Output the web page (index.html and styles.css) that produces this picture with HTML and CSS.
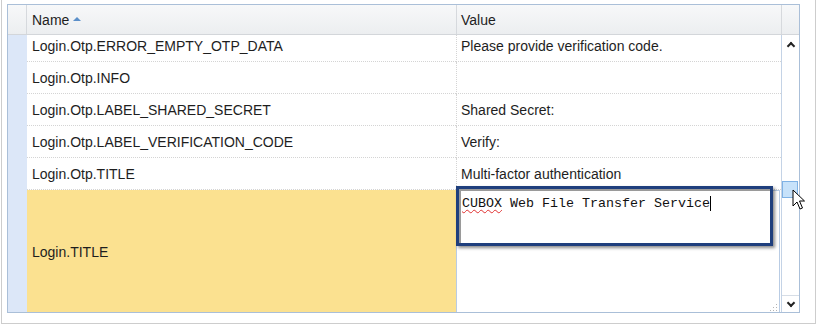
FILE: index.html
```html
<!DOCTYPE html>
<html lang="en">
<head>
	<meta charset="UTF-8">
	<title>Resources</title>
	<link rel="stylesheet" href="styles.css">
</head>
<body>
	<div class="frame">
		<div class="grid">
			<div class="head">
				<div class="hcell corner"></div>
				<div class="hcell hname">Name <span class="sort"></span></div>
				<div class="hcell hvalue">Value</div>
				<div class="hcell filler"></div>
			</div>
			<div class="body">
				<div class="rows">
					<div class="rowlist">
						<div class="row">
							<div class="rh"></div>
							<div class="cell name">Login.Otp.ERROR_EMPTY_OTP_DATA</div>
							<div class="cell value">Please provide verification code.</div>
						</div>
						<div class="row">
							<div class="rh"></div>
							<div class="cell name">Login.Otp.INFO</div>
							<div class="cell value"></div>
						</div>
						<div class="row">
							<div class="rh"></div>
							<div class="cell name">Login.Otp.LABEL_SHARED_SECRET</div>
							<div class="cell value">Shared Secret:</div>
						</div>
						<div class="row">
							<div class="rh"></div>
							<div class="cell name">Login.Otp.LABEL_VERIFICATION_CODE</div>
							<div class="cell value">Verify:</div>
						</div>
						<div class="row">
							<div class="rh"></div>
							<div class="cell name">Login.Otp.TITLE</div>
							<div class="cell value">Multi-factor authentication</div>
						</div>
						<div class="row editing">
							<div class="rh"></div>
							<div class="cell name">Login.TITLE</div>
							<div class="cell value">
								<div class="editor">
									<div class="grip"></div>
								</div>
								<div class="focus">
									<span class="typo">CUBOX</span> Web File Transfer Service<span class="caret"></span>
								</div>
							</div>
						</div>
					</div>
				</div>
				<div class="vscroll">
					<div class="sbtn up"><span class="chev"></span></div>
					<div class="track">
						<div class="thumb"></div>
					</div>
					<div class="sbtn down"><span class="chev"></span></div>
				</div>
			</div>
		</div>
		<svg class="pointer" width="14" height="22" viewBox="0 0 14 22">
			<path d="M1 1 L1 17 L5 13 L8 20 L10.5 19 L7.5 12 L12.5 12 Z" fill="#fff" stroke="#000" stroke-width="1" stroke-linejoin="miter"/>
		</svg>
	</div>
</body>
</html>
```

FILE: styles.css
```css
body {
	margin:0;
	font-family:"Liberation Sans", Arial, sans-serif;
	font-size:14px;
	color:#1e1e1e;
	background:#fff;
}

.frame {
	position:relative;
	width:815px;
	height:324px;
	margin-left:1px;
	padding:4px 15px 0 5px;
	border-left:1px solid #cdcdcd;
	border-right:1px solid #cdcdcd;
	border-bottom:1px solid #cdcdcd;
	box-sizing:border-box;
}

.grid {
	border:1px solid #aabfd8;
	width:793px;
	height:309px;
	box-sizing:border-box;
	display:flex;
	flex-direction:column;
}

/* header */
.head {
	display:flex;
	height:30px;
	box-sizing:border-box;
	border-bottom:1px solid #d3d6da;
	background:linear-gradient(#f7f8f9, #eceef0);
}
.hcell {
	box-sizing:border-box;
	border-right:1px solid #d6d9dd;
	display:flex;
	align-items:center;
	padding-top:1px;
}
.corner { width:19px; }
.hname { width:430px; padding-left:5px; }
.hvalue { width:325px; padding-left:4px; }
.filler { width:17px; border-right:none; }
.sort {
	display:inline-block;
	width:0;
	height:0;
	margin-left:4px;
	margin-bottom:2px;
	border-left:4px solid transparent;
	border-right:4px solid transparent;
	border-bottom:4px solid #5b8fc9;
}

/* body */
.body {
	display:flex;
	height:277px;
}
.rows {
	width:773px;
	overflow:hidden;
}
.rowlist {
	margin-top:-5px;
}
.row {
	display:flex;
	height:32px;
}
.rh {
	width:19px;
	background:#dce7f8;
	flex:none;
}
.cell {
	box-sizing:border-box;
	display:flex;
	align-items:center;
	border-bottom:1px dotted #d4d4d4;
}
.cell.name {
	width:429px;
	padding-left:5px;
}
.cell.value {
	width:325px;
	padding-left:4px;
	border-left:1px dotted #d4d4d4;
}

.row.editing {
	height:124px;
}
.row.editing .name {
	background:#fbe190;
	border-bottom:none;
}
.row.editing .value {
	position:relative;
	padding:0;
	border-left:none;
	border-bottom:none;
	align-items:stretch;
}
.editor {
	flex:1;
	margin-right:1px;
	border:1px solid #b9cce4;
	background:#fff;
	position:relative;
}
.grip {
	position:absolute;
	right:2px;
	bottom:2px;
	width:8px;
	height:8px;
	background:
		radial-gradient(circle, #b4b4b4 0.8px, transparent 1px) 6px 0 / 3px 3px no-repeat,
		radial-gradient(circle, #b4b4b4 0.8px, transparent 1px) 3px 3px / 3px 3px no-repeat,
		radial-gradient(circle, #b4b4b4 0.8px, transparent 1px) 6px 3px / 3px 3px no-repeat,
		radial-gradient(circle, #b4b4b4 0.8px, transparent 1px) 0 6px / 3px 3px no-repeat,
		radial-gradient(circle, #b4b4b4 0.8px, transparent 1px) 3px 6px / 3px 3px no-repeat,
		radial-gradient(circle, #b4b4b4 0.8px, transparent 1px) 6px 6px / 3px 3px no-repeat;
}
.focus {
	position:absolute;
	top:-4px;
	left:0;
	width:317px;
	height:60px;
	box-sizing:border-box;
	border:3px solid #1f3f7d;
	box-shadow:2px 2px 3px rgba(0,0,0,0.45), inset 2px 2px 0 #9a9a9a;
	background:#fff;
	padding:7px 3px 0;
	font-family:"Liberation Mono", "Courier New", monospace;
	font-size:13.33px;
	line-height:15px;
	color:#111;
	white-space:nowrap;
}
.typo {
	text-decoration:underline wavy #e03030;
	text-decoration-thickness:1px;
	text-underline-offset:2px;
}
.caret {
	display:inline-block;
	width:1px;
	height:15px;
	background:#000;
	vertical-align:top;
}

/* scrollbar */
.vscroll {
	width:18px;
	box-sizing:border-box;
	border-left:1px solid #c4d3e6;
	display:flex;
	flex-direction:column;
	background:#fff;
}
.sbtn {
	height:18px;
	display:flex;
	align-items:center;
	justify-content:center;
}
.sbtn.down {
	height:16px;
	border-top:1px solid #d6dde6;
}
.chev {
	width:4px;
	height:4px;
	border-left:2px solid #222;
	border-top:2px solid #222;
	transform:rotate(45deg);
	margin-top:3px;
}
.down .chev {
	transform:rotate(225deg);
	margin-top:-3px;
}
.track {
	flex:1;
	position:relative;
}
.thumb {
	position:absolute;
	top:128px;
	left:0;
	width:16px;
	height:17px;
	box-sizing:border-box;
	background:#c7e2fa;
	border:1px solid #7fb2e5;
}

.pointer {
	position:absolute;
	left:790px;
	top:189px;
}
```
